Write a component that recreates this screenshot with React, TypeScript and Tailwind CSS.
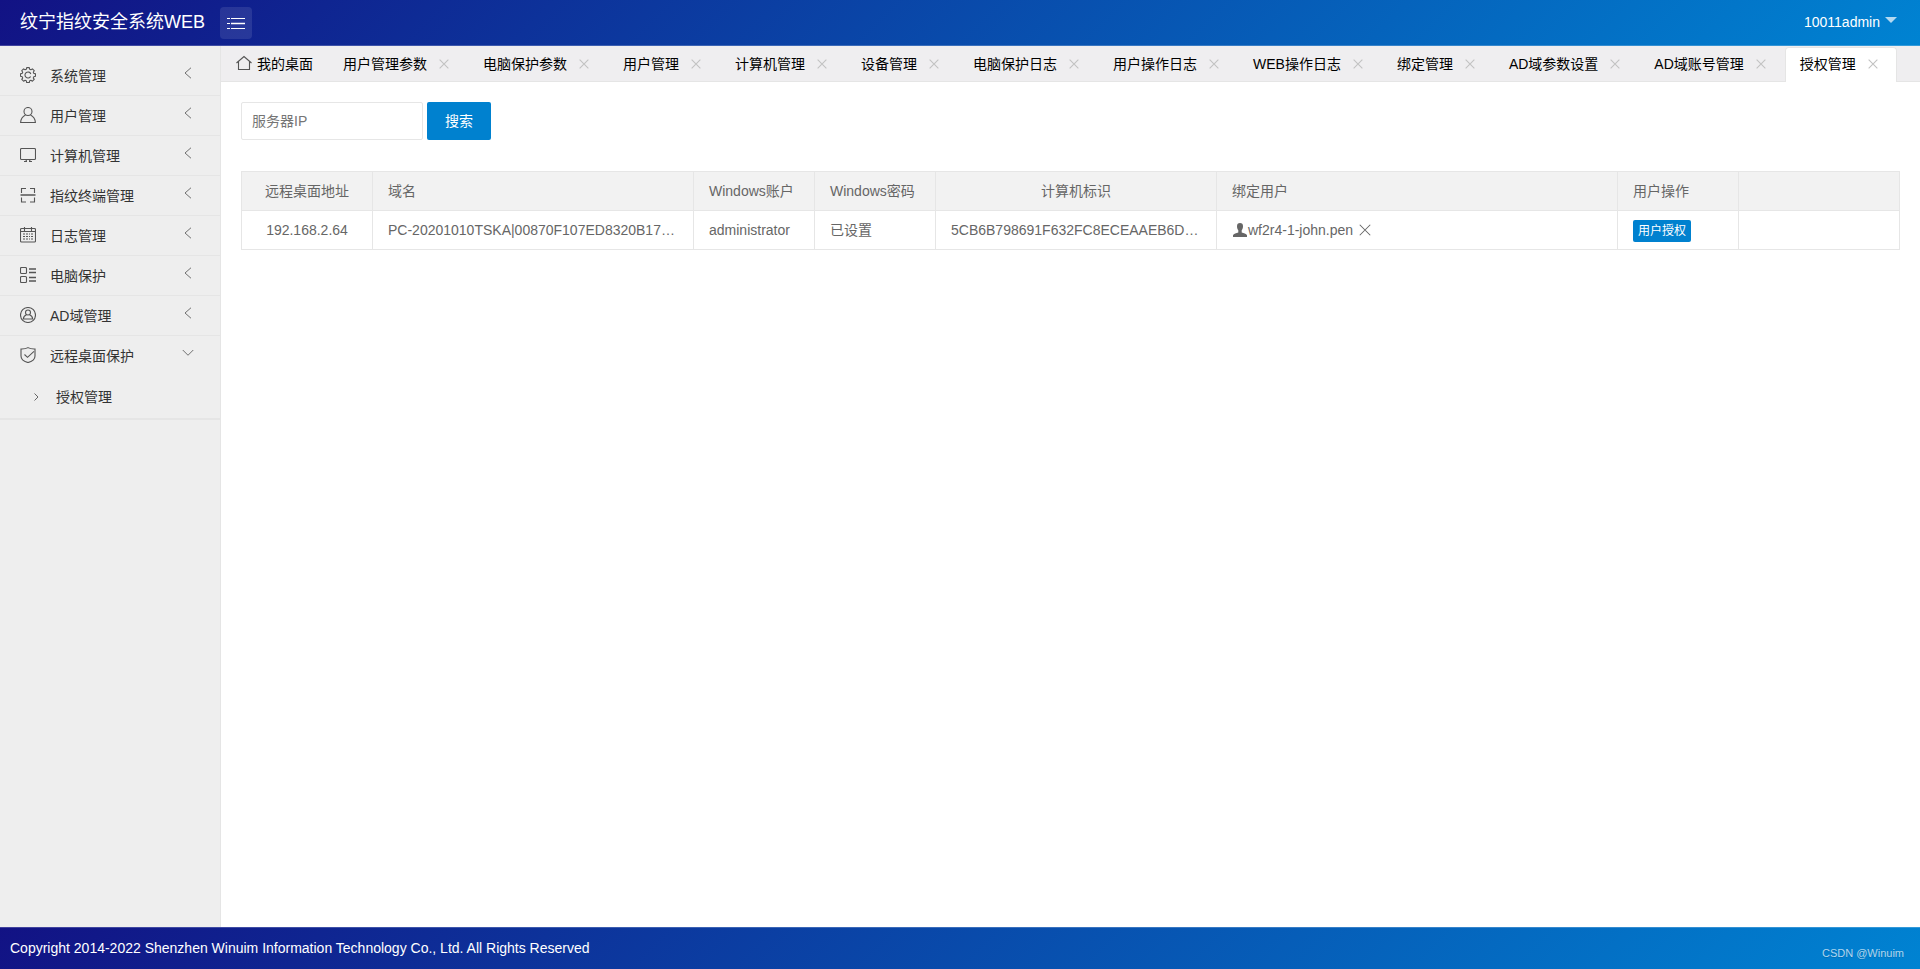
import { useState, type ReactNode } from "react"

const tableHeadings = [
  { title: "远程桌面地址", width: "w-[131px]", center: true },
  { title: "域名", width: "w-[321px]" },
  { title: "Windows账户", width: "w-[121px]" },
  { title: "Windows密码", width: "w-[121px]" },
  { title: "计算机标识", width: "w-[281px]", center: true },
  { title: "绑定用户", width: "w-[401px]" },
  { title: "用户操作", width: "w-[121px]" },
  { title: "", width: "" },
]

const rows = [
  {
    ip: "192.168.2.64",
    domain: "PC-20201010TSKA|00870F107ED8320B17…",
    account: "administrator",
    password: "已设置",
    machine: "5CB6B798691F632FC8ECEAAEB6D…",
    user: "wf2r4-1-john.pen",
  },
]

const initialTabs = [
  "用户管理参数",
  "电脑保护参数",
  "用户管理",
  "计算机管理",
  "设备管理",
  "电脑保护日志",
  "用户操作日志",
  "WEB操作日志",
  "绑定管理",
  "AD域参数设置",
  "AD域账号管理",
  "授权管理",
]

function Icon({ children, className = "size-4" }: { children: ReactNode; className?: string }) {
  return (
    <svg
      viewBox="0 0 16 16"
      className={`shrink-0 ${className}`}
      fill="none"
      stroke="currentColor"
      strokeWidth="1.1"
      aria-hidden="true"
    >
      {children}
    </svg>
  )
}

const menu = [
  {
    title: "系统管理",
    icon: (
      <>
        <path
          d="M6.7.6h2.6l.4 1.7 1.2.5 1.5-.9 1.8 1.8-.9 1.5.5 1.2 1.7.4v2.5l-1.7.4-.5 1.2.9 1.5-1.8 1.8-1.5-.9-1.2.5-.4 1.7H6.7l-.4-1.7-1.2-.5-1.5.9-1.8-1.8.9-1.5-.5-1.2-1.700-.4V6.800l1.700-.4.500-1.200-.9-1.500 1.800-1.800 1.500.9 1.200-.5z"
          strokeLinejoin="round"
        />
        <path d="M10.6 9.400A3 3 0 1 1 10.800 7" />
      </>
    ),
  },
  {
    title: "用户管理",
    icon: (
      <>
        <circle cx="8" cy="4.5" r="4" />
        <path d="M5.500 8C2.500 9.500.8 12 .6 15.500h14.800c-.2-3.500-1.900-6-4.900-7.500" />
      </>
    ),
  },
  {
    title: "计算机管理",
    icon: (
      <>
        <rect x=".5" y="1.5" width="15" height="11" rx="1" />
        <path d="M6.500 12.500l-.5 2M9.500 12.500l.5 2M4 14.500h3M9 14.500h3" />
      </>
    ),
  },
  {
    title: "指纹终端管理",
    icon: (
      <>
        <path d="M1.500 6V1.500H6M10 1.500h4.500V6M1.500 10.500V15H6M10 15h4.500v-4.500" />
        <path d="M.5 8h15" strokeWidth="1.5" />
      </>
    ),
  },
  {
    title: "日志管理",
    icon: (
      <>
        <rect x=".5" y="1.5" width="15" height="13.5" rx="1" />
        <path d="M.5 4.500h15M4.500 0v4M11.500 0v4" />
        <path d="M3 7h2m1 0h2m1 0h1m1 0h2M3 9.500h2m1 0h2m1 0h1m1 0h2M3 12h2m1 0h2m1 0h1m1 0h2" />
      </>
    ),
  },
  {
    title: "电脑保护",
    icon: (
      <>
        <rect x=".5" y=".5" width="6" height="6" rx="1" />
        <rect x=".5" y="9.5" width="6" height="6" rx="1" />
        <path d="M9 2h7M9 5.500h7M9 10.500h7M9 14h7" strokeWidth="1.4" />
      </>
    ),
  },
  {
    title: "AD域管理",
    icon: (
      <>
        <circle cx="8" cy="8" r="7.5" />
        <circle cx="8" cy="5.5" r="2.5" />
        <path d="M6.500 7.800c-2 .7-3 2-3.200 4.200h9.400c-.2-2.200-1.200-3.500-3.200-4.200" />
      </>
    ),
  },
  {
    title: "远程桌面保护",
    icon: (
      <>
        <path d="M8 .6c2 1.200 4.300 1.500 7 1.400v7c0 3.300-3 5.500-7 6.600C4 14.500 1 12.300 1 9V2C3.700 2.100 6 1.800 8 .6z" />
        <path d="M4.500 7.500l3 2.800 6.500-6" />
      </>
    ),
    children: ["授权管理"],
  },
]

function Header() {
  return (
    <header className="flex h-[46px] items-start border-b border-white/20 bg-linear-[135deg,#121284,#0083d2] bg-origin-border text-white">
      <h1 className="w-[220px] pl-5 text-lg leading-[44px] whitespace-nowrap">纹宁指纹安全系统WEB</h1>
      <button
        type="button"
        aria-label="展开或收起菜单"
        className="mt-[7px] flex size-8 items-center justify-center rounded-sm bg-white/10 text-white"
      >
        <svg viewBox="0 0 18 12" className="h-3 w-[18px]" stroke="currentColor" aria-hidden="true">
          <path d="M0 1.500h3M4 1.500h14M0 6.500h3M0 11.500h3M4 11.500h14" />
          <path d="M4 6.500h14" strokeWidth="1.5" />
        </svg>
      </button>
      <button type="button" className="mr-[23px] ml-auto flex items-center gap-[5px] leading-[44px]">
        10011admin
        <span className="mb-1 border-x-6 border-t-6 border-x-transparent border-t-white/70" />
      </button>
    </header>
  )
}

function Sidebar() {
  const [open, setOpen] = useState("远程桌面保护")

  return (
    <nav className="w-[221px] shrink-0 border-r border-[#e5e5e5] bg-[#eeeeee] pt-[10px] text-[#333]">
      <ul className="border-b-2 border-[#e5e5e5]">
        {menu.map((item, i) => (
          <li key={item.title} className={i < menu.length - 1 ? "border-b border-[#e5e5e5]" : ""}>
            <button
              type="button"
              aria-expanded={open === item.title}
              onClick={() => setOpen(open === item.title ? "" : item.title)}
              className="flex h-[39px] w-full items-center pr-[26px] pl-5"
            >
              <Icon className="mb-0.5 size-4 text-[#555]">{item.icon}</Icon>
              <span className="ml-[14px]">{item.title}</span>
              <Icon className="mb-1.5 ml-auto size-3 text-[#555]">
                {open === item.title ? <path d="M1 4l7 7 7-7" /> : <path d="M12 1L4 8l8 7" />}
              </Icon>
            </button>
            {item.children && open === item.title && (
              <ul className="pb-px">
                {item.children.map((child) => (
                  <li key={child}>
                    <a href="#" className="flex h-[42px] items-center pt-0.5 pl-8">
                      <Icon className="size-2 text-[#666]">
                        <path d="M5 1l7 7-7 7" strokeWidth="2" />
                      </Icon>
                      <span className="ml-4">{child}</span>
                    </a>
                  </li>
                ))}
              </ul>
            )}
          </li>
        ))}
      </ul>
    </nav>
  )
}

function Tabs() {
  const [tabs, setTabs] = useState(initialTabs)
  const [active, setActive] = useState("授权管理")

  return (
    <ul className="flex h-9 border-b border-[#e5e5e5] bg-[#efeef0] text-black">
      <li className="px-[15px]">
        <button type="button" onClick={() => setActive("")} className="flex h-[35px] items-center gap-[5px]">
          <Icon className="mb-0.5 size-4 text-[#555]">
            <path d="M.5 8L8 1.500 15.500 8M2.500 6.500v8h11v-8" />
          </Icon>
          我的桌面
        </button>
      </li>
      {tabs.map((tab) => (
        <li
          key={tab}
          className={
            tab === active
              ? "mt-px -mb-px flex items-center rounded-t-sm border border-b-0 border-[#e5e5e5] bg-white px-[14px] pb-[3px]"
              : "flex items-center px-[15px]"
          }
        >
          <button type="button" onClick={() => setActive(tab)} className="whitespace-nowrap">
            {tab}
          </button>
          <button
            type="button"
            aria-label={`关闭${tab}`}
            onClick={() => setTabs(tabs.filter((t) => t !== tab))}
            className="ml-2 flex size-[18px] items-center justify-center text-[#c2c2c2]"
          >
            <Icon className="size-[10px]">
              <path d="M1 1l14 14M15 1L1 15" strokeWidth="1.8" />
            </Icon>
          </button>
        </li>
      ))}
    </ul>
  )
}

function HostTable() {
  const cell = "h-[39px] truncate border-r border-b border-[#e6e6e6] px-[15px]"

  return (
    <table className="mt-[31px] w-full table-fixed border-separate border-spacing-0 border-t border-l border-[#e6e6e6] text-[#666]">
      <thead>
        <tr className="bg-[#f2f2f2]">
          {tableHeadings.map((h) => (
            <th
              key={h.title}
              scope="col"
              className={`${cell} ${h.width} font-normal ${h.center ? "text-center" : "text-left"}`}
            >
              {h.title}
            </th>
          ))}
        </tr>
      </thead>
      <tbody>
        {rows.map((row) => (
          <tr key={row.ip}>
            <td className={`${cell} text-center`}>{row.ip}</td>
            <td className={cell}>{row.domain}</td>
            <td className={cell}>{row.account}</td>
            <td className={cell}>{row.password}</td>
            <td className={cell}>{row.machine}</td>
            <td className={cell}>
              <div className="flex items-center">
                <svg viewBox="0 0 16 16" className="size-4 shrink-0" fill="currentColor" aria-hidden="true">
                  <path d="M8 1C6 1 5 2.200 5 4.200c0 1.700.5 3 1.300 4v2.400C4.500 11.400 1.500 11.700 1 13.200V15h14v-1.800c-.5-1.500-3.500-1.800-5.300-2.600V8.200c.8-1 1.300-2.300 1.300-4C11 2.200 10 1 8 1z" />
                </svg>
                {row.user}
                <button type="button" aria-label="解除绑定" className="ml-[6px]">
                  <Icon className="size-3">
                    <path d="M1 1l14 14M15 1L1 15" strokeWidth="1.4" />
                  </Icon>
                </button>
              </div>
            </td>
            <td className={`${cell} pt-0.5`}>
              <button
                type="button"
                className="block h-[22px] rounded-xs bg-[#0081cf] px-[5px] text-xs leading-[22px] text-white"
              >
                用户授权
              </button>
            </td>
            <td className={cell} />
          </tr>
        ))}
      </tbody>
    </table>
  )
}

export default function App() {
  return (
    <div className="flex min-h-screen flex-col bg-white font-['Liberation_Sans','Noto_Sans_CJK_SC',sans-serif] text-sm">
      <Header />
      <div className="flex grow">
        <Sidebar />
        <main className="min-w-0 grow">
          <Tabs />
          <div className="p-5">
            <form className="flex gap-1" onSubmit={(e) => e.preventDefault()}>
              <input
                type="text"
                aria-label="服务器IP"
                placeholder="服务器IP"
                className="h-[38px] w-[182px] rounded-xs border border-[#e6e6e6] px-[10px] placeholder:text-[#757575]"
              />
              <button type="submit" className="h-[38px] rounded-xs bg-[#0081cf] px-[18px] text-white">
                搜索
              </button>
            </form>
            <HostTable />
          </div>
        </main>
      </div>
      <footer className="flex h-[42px] items-center justify-between border-t border-white/20 bg-linear-[135deg,#121284,#0083d2] bg-origin-border pr-4 pb-0.5 pl-[10px] text-white">
        <p>Copyright 2014-2022 Shenzhen Winuim Information Technology Co., Ltd. All Rights Reserved</p>
        <span className="mt-3 text-[11px] text-white/70 text-shadow-2xs">CSDN @Winuim</span>
      </footer>
    </div>
  )
}
